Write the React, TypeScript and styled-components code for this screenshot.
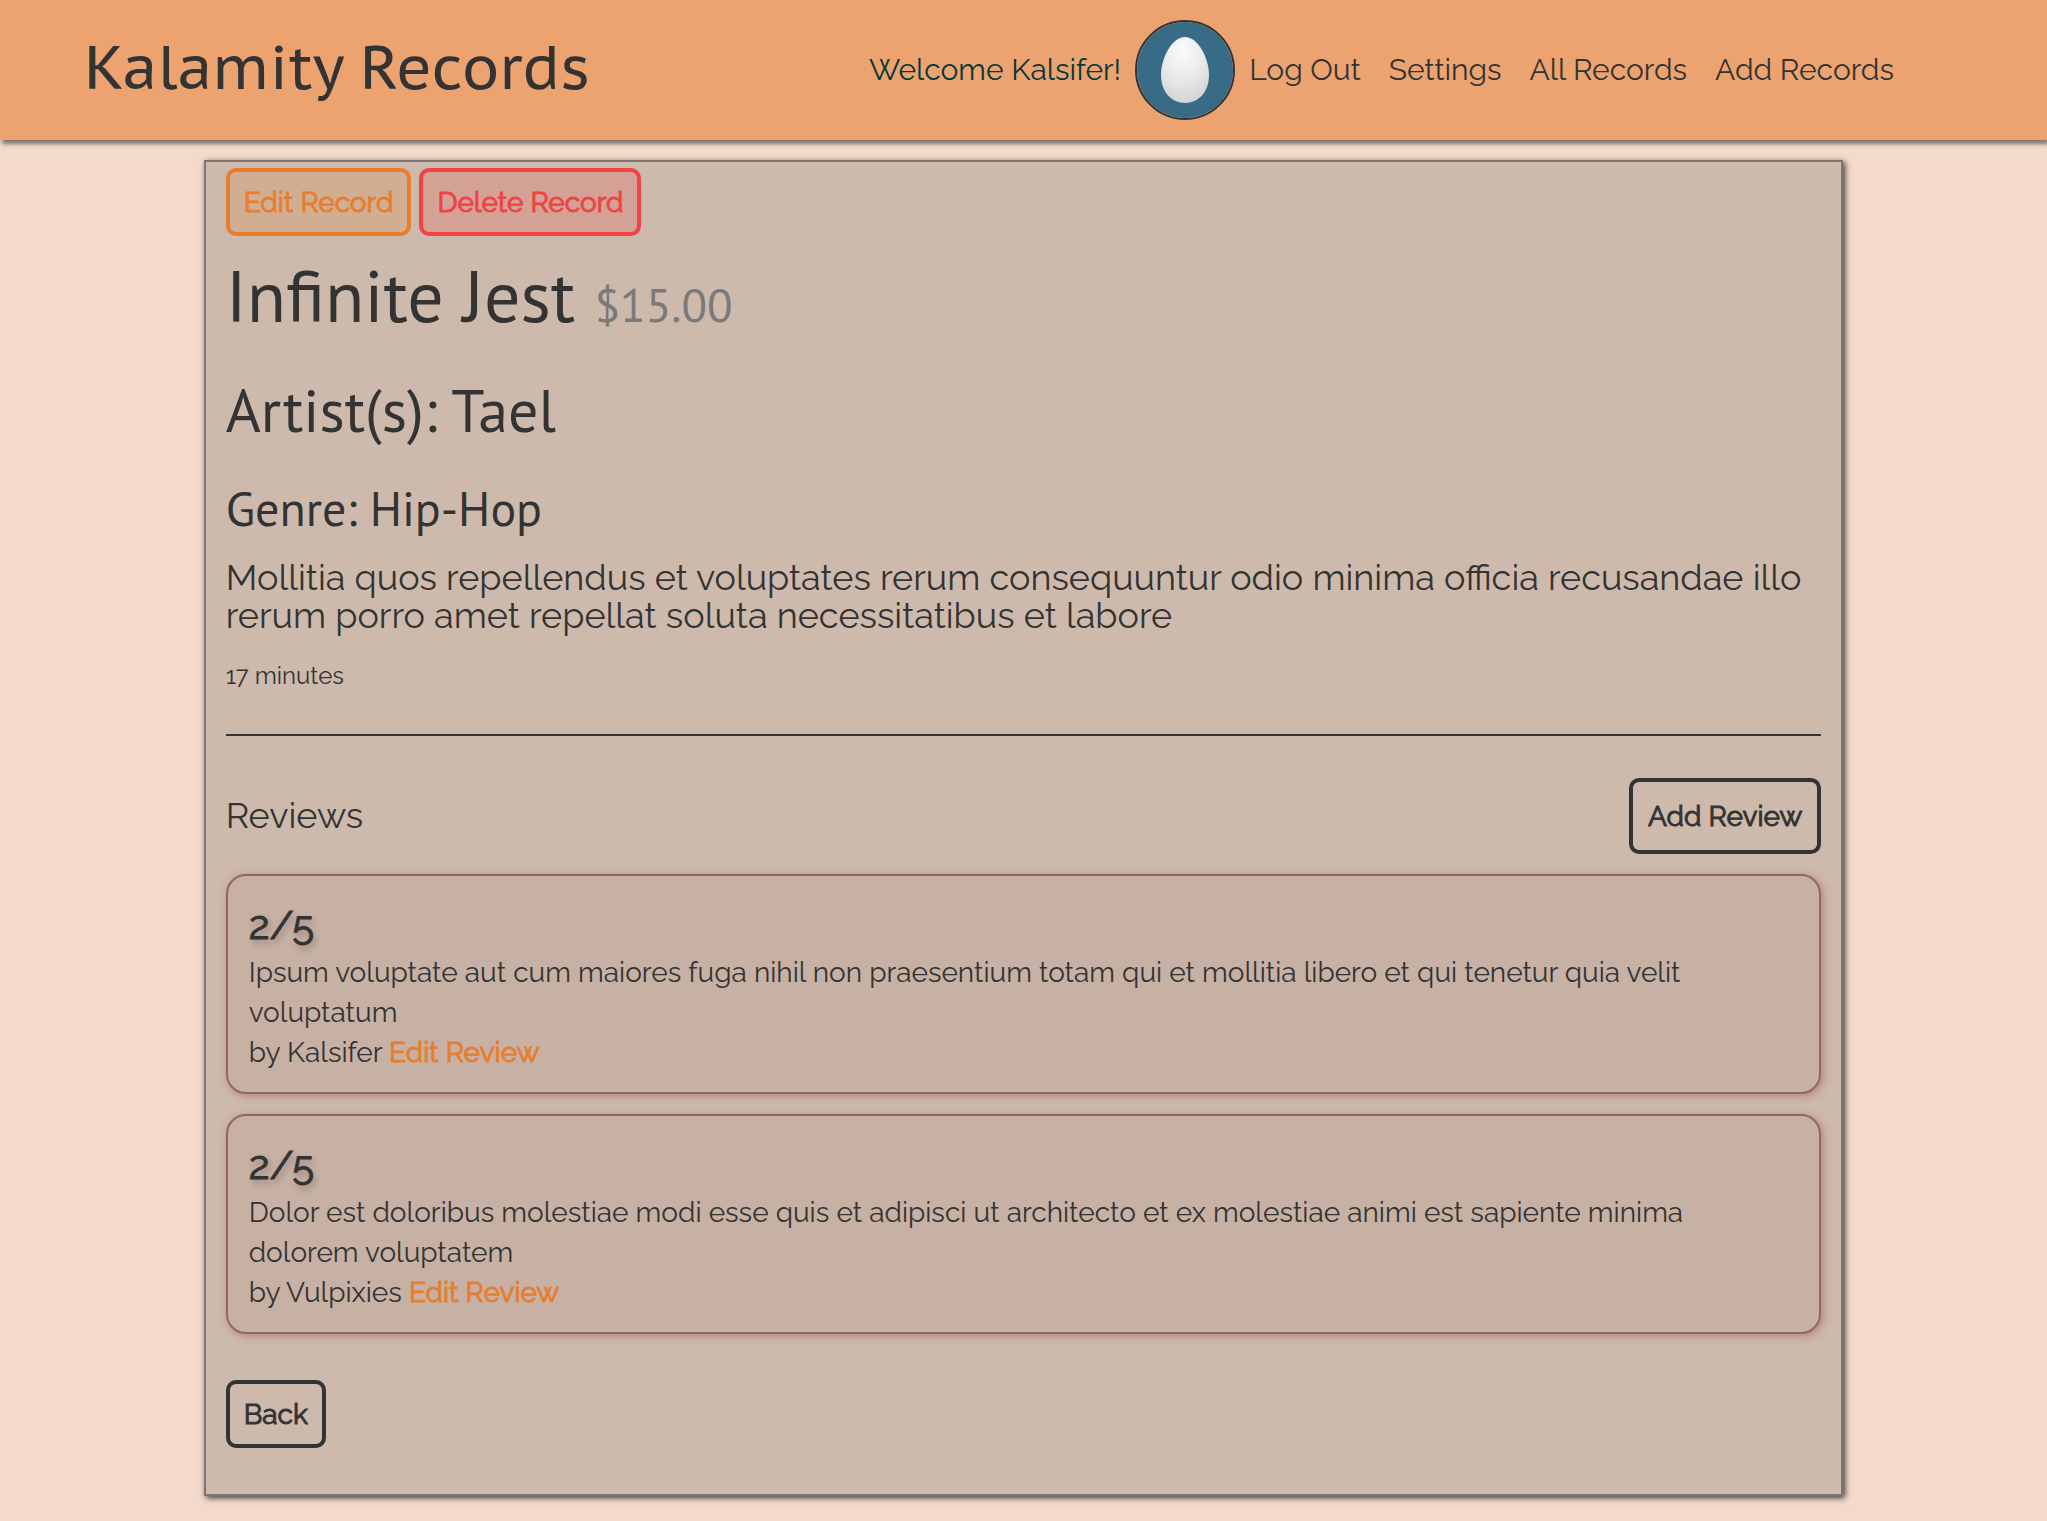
import React from "react";
import styled, { createGlobalStyle, css } from "styled-components";

const ink = "#333333";
const orange = "#e67e30";
const red = "#f04343";
const bodyFont = `Raleway, Lato, "Open Sans", sans-serif`;
const headingFont = `"PT Sans", "Noto Sans", "Open Sans", sans-serif`;
const brandFont = `"PT Sans Caption", "Noto Sans", "Open Sans", sans-serif`;

/* Thickens the regular weight while keeping its letter widths. */
const emphasis = css`
  font-weight: 400;
  -webkit-text-stroke: 1px currentColor;
`;

const GlobalStyle = createGlobalStyle`
  *, *::before, *::after { box-sizing: border-box; }
  body {
    margin: 0;
    background: #f4dacb;
    color: ${ink};
    font: 400 28px/40px ${bodyFont};
  }
  h1, h2, h3, h4, p, ul { margin: 0; padding: 0; font-weight: 400; }
  a { color: inherit; text-decoration: none; }
`;

const Header = styled.header`
  display: flex;
  align-items: center;
  justify-content: space-between;
  min-height: 140px;
  padding: 20px 153px 20px 84px;
  background: #eca36f;
  box-shadow: 2px 4px 4px rgba(51, 51, 51, 0.6);
`;

const Brand = styled.a`
  padding-bottom: 6px;
  font-family: ${brandFont};
  font-size: 60px;
  line-height: 72px;
`;

const Nav = styled.nav`
  display: flex;
  align-items: center;
  gap: 14px;
  font-size: 30px;
`;

const Welcome = styled.span`
  color: #05383a;
`;

const NavLinks = styled.ul`
  display: flex;
  gap: 28px;
  list-style: none;
`;

const AvatarFrame = styled.a`
  display: block;
  width: 100px;
  height: 100px;
  border: 2px solid ${ink};
  border-radius: 50%;
  overflow: hidden;

  svg { display: block; width: 100%; height: 100%; }
`;

const Card = styled.main`
  width: calc(80% + 2px);
  margin: 20px auto 24px;
  padding: 6px 20px 46px;
  background: #cdbaac;
  border: 2px solid #80766f;
  box-shadow: 2px 2px 6px rgba(40, 40, 40, 0.9);
`;

const Actions = styled.div`
  display: flex;
  gap: 8px;
`;

const Button = styled.button<{ $tone?: string; $fill?: string; $tall?: boolean }>`
  height: ${(p) => (p.$tall ? 76 : 68)}px;
  padding: 2px ${(p) => (p.$tall ? 15 : 14)}px 0;
  border: 4px solid ${(p) => p.$tone || ink};
  border-radius: 10px;
  background: ${(p) => p.$fill || "transparent"};
  color: ${(p) => p.$tone || ink};
  font: 400 28px/40px ${bodyFont};
  ${emphasis}
  cursor: pointer;
`;

const Title = styled.h1`
  margin-top: 13px;
  font-family: ${headingFont};
  font-size: 72px;
  line-height: 94px;
`;

const Price = styled.small`
  color: #7a7a7a;
  font-size: 47px;
  line-height: 48px;
`;

const Artist = styled.h2`
  margin-top: 27px;
  font-family: ${headingFont};
  font-size: 60px;
  line-height: 80px;
`;

const Genre = styled.h3`
  margin-top: 26px;
  font-family: ${headingFont};
  font-size: 48px;
  line-height: 64px;
`;

const Description = styled.p`
  margin-top: 18px;
  font-size: 36px;
  line-height: 38px;
`;

const Length = styled.p`
  margin-top: 22px;
  font-size: 24px;
  line-height: 40px;
`;

const Divider = styled.hr`
  height: 2px;
  margin: 38px 0 42px;
  border: 0;
  background: ${ink};
`;

const ReviewsHeader = styled.div`
  display: flex;
  align-items: center;
  justify-content: space-between;
`;

const ReviewsTitle = styled.h4`
  padding-bottom: 2px;
  font-size: 36px;
  line-height: 40px;
`;

const ReviewList = styled.section`
  display: grid;
  gap: 20px;
  margin: 20px 0 46px;
`;

const Review = styled.article`
  padding: 21px 24px 19px 21px;
  border: 2px solid #966560;
  border-radius: 20px;
  background: #c7b0a4;
  box-shadow: 2px 2px 8px rgba(150, 80, 75, 0.5);
`;

const Rating = styled.p`
  ${emphasis}
  font-size: 40px;
  line-height: 56px;
  text-shadow: 2px 4px 6px rgba(51, 51, 51, 0.4);
`;

const EditLink = styled.a`
  && { color: ${orange}; }
  ${emphasis}
`;

const Egg = () => (
  <svg viewBox="0 0 96 96" role="img" aria-label="Kalsifer">
    <defs>
      <radialGradient id="shell" cx="0.45" cy="0.2" r="0.85">
        <stop offset="0" stopColor="#fafafa" />
        <stop offset="0.5" stopColor="#ebebeb" />
        <stop offset="1" stopColor="#d0d0d2" />
      </radialGradient>
    </defs>
    <rect width="96" height="96" fill="#386b85" />
    <path
      d="M48 15C61 15 72 36 72 53C72 70 61.500 81 48 81C34.500 81 24 70 24 53C24 36 35 15 48 15Z"
      fill="url(#shell)"
    />
  </svg>
);

const links = ["Log Out", "Settings", "All Records", "Add Records"];

const reviews = [
  {
    rating: "2/5",
    text: "Ipsum voluptate aut cum maiores fuga nihil non praesentium totam qui et mollitia libero et qui tenetur quia velit voluptatum",
    author: "Kalsifer",
  },
  {
    rating: "2/5",
    text: "Dolor est doloribus molestiae modi esse quis et adipisci ut architecto et ex molestiae animi est sapiente minima dolorem voluptatem",
    author: "Vulpixies",
  },
];

export default function App() {
  return (
    <>
      <GlobalStyle />
      <Header>
        <Brand href="#">Kalamity Records</Brand>
        <Nav>
          <Welcome>Welcome Kalsifer!</Welcome>
          <AvatarFrame href="#">
            <Egg />
          </AvatarFrame>
          <NavLinks>
            {links.map((label) => (
              <li key={label}>
                <a href="#">{label}</a>
              </li>
            ))}
          </NavLinks>
        </Nav>
      </Header>
      <Card>
        <Actions>
          <Button $tone={orange} $fill="#d1ad92">Edit Record</Button>
          <Button $tone={red} $fill="#d4a197">Delete Record</Button>
        </Actions>
        <Title>
          Infinite Jest <Price>$15.00</Price>
        </Title>
        <Artist>Artist(s): Tael</Artist>
        <Genre>Genre: Hip-Hop</Genre>
        <Description>
          Mollitia quos repellendus et voluptates rerum consequuntur odio minima officia recusandae
          illo rerum porro amet repellat soluta necessitatibus et labore
        </Description>
        <Length>17 minutes</Length>
        <Divider />
        <ReviewsHeader>
          <ReviewsTitle>Reviews</ReviewsTitle>
          <Button $tall>Add Review</Button>
        </ReviewsHeader>
        <ReviewList>
          {reviews.map((review) => (
            <Review key={review.author}>
              <Rating>{review.rating}</Rating>
              <p>{review.text}</p>
              <p>
                by {review.author} <EditLink href="#">Edit Review</EditLink>
              </p>
            </Review>
          ))}
        </ReviewList>
        <Button>Back</Button>
      </Card>
    </>
  );
}
